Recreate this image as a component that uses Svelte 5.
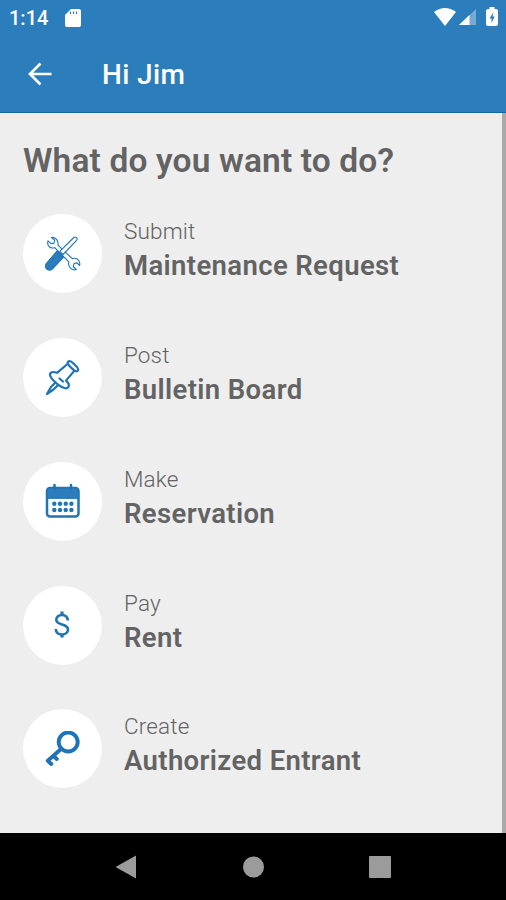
<script lang="ts">
    type Icon = "tools" | "pin" | "calendar" | "dollar" | "key";

    interface Action {
        verb: string;
        name: string;
        icon: Icon;
    }

    const actions: Action[] = [
        { verb: "Submit", name: "Maintenance Request", icon: "tools" },
        { verb: "Post", name: "Bulletin Board", icon: "pin" },
        { verb: "Make", name: "Reservation", icon: "calendar" },
        { verb: "Pay", name: "Rent", icon: "dollar" },
        { verb: "Create", name: "Authorized Entrant", icon: "key" },
    ];
</script>

<div class="screen">
    <header>
        <div class="status">
            <span class="time">1:14</span>
            <svg class="sd" width="16" height="20" viewBox="0 0 16 20">
                <path d="M6 1h8q2 0 2 2v14q0 2-2 2H2q-2 0-2-2V7z" fill="#fff" />
                <path d="M5.5 3.5v2.500M8.5 3.5v2.500M11.5 3.5v2.500" stroke="#2b7dbc" stroke-width="1.2" />
            </svg>
            <div class="signals">
                <svg width="22" height="18" viewBox="0 0 22 18">
                    <path d="M0 4Q11-4 22 4L11 18z" fill="#fff" />
                </svg>
                <svg class="cell" width="18" height="18" viewBox="0 0 18 18">
                    <path d="M17 1v16H0z" fill="#fff" fill-opacity=".35" />
                    <path d="M10.5 7v10H0z" fill="#fff" />
                </svg>
                <svg class="battery" width="12" height="20" viewBox="0 0 12 20">
                    <path d="M3.5 0h5v2H10q2 0 2 2v13q0 2-2 2H2q-2 0-2-2V4q0-2 2-2h1.500z" fill="#fff" />
                    <path d="M7.500 5L3.500 11.500h2V16L8.700 9.500H6.500z" fill="#2b7dbc" />
                </svg>
            </div>
        </div>
        <div class="toolbar">
            <button aria-label="Back">
                <svg width="24" height="24" viewBox="0 0 24 24" fill="none" stroke="#fff" stroke-width="2.700">
                    <path d="M23.500 12H3M12.500 1.500L2 12l10.500 10.500" />
                </svg>
            </button>
            <h1>Hi Jim</h1>
        </div>
    </header>

    <main>
        <h2>What do you want to do?</h2>
        <ul>
            {#each actions as action}
                <li>
                    <div class="circle">
                        <svg width="36" height="36" viewBox="0 0 36 36" fill="none" stroke="#1f74b8" stroke-linejoin="round" stroke-linecap="round">
                            {#if action.icon === "tools"}
                                <g stroke-width="1.100">
                                    <path d="M6.500 1.500l3.200 2.700-.7 2.900-3 .6-3-2.800c-1 3 .4 6.300 3.500 7 1.200.3 2.200 0 3.200-.2L23.800 25.800c-.8 3.300 1 7.200 4.500 8 1.200.2 2.200 0 3-.3l-3-3 .8-3 3-.6 2.500 2.600c.9-3.600-1.300-6.800-4.300-7.200-1.200-.2-2.200 0-3 .4L13 9.200c.8-3.600-2-8.500-6.500-7.700z" />
                                    <path d="M18 18.500L14.800 15.300 28.800 1.500c2-1.500 4.300.7 2.800 2.800z" fill="#fff" />
                                    <path d="M12 15l6.500 6L7.300 33c-3.700 3.400-9-1.700-6-5.300z" fill="#2b7dbc" />
                                </g>
                            {:else if action.icon === "pin"}
                                <g stroke-width="2.200">
                                    <path d="M23 1.800c1.700-1.600 3.700 0 5.800 2s5.200 4.500 4.200 6.500c-.8 1.500-2.700 1.200-4.300-.3s-7.500-6.400-5.700-8.200z" />
                                    <path d="M22.500 4L12 12.800c-3.500-1.500-8-1-6.800 3 .8 2.800 4.800 6.500 8.500 9.300s8.500 4.400 9.700 2c1.400-2.600-.3-4.600-2.400-6.500l8.500-10" />
                                    <path d="M10.500 22.500L6 27 2 34l6.500-4.500 4.700-4.500M14.500 18.500l3.500 3" />
                                </g>
                            {:else if action.icon === "calendar"}
                                <rect x="2" y="5" width="31.500" height="28.500" rx="3" stroke-width="2.500" />
                                <path d="M2 15V8q0-3 3-3h25.500q3 0 3 3v7z" fill="#2b7dbc" />
                                <path d="M9.500 2v4M26 2v4" stroke-width="2.500" />
                                <g fill="#1f74b8" stroke="none">
                                    {#each [9.300, 15, 20.700, 26.400] as x}
                                        <circle cx={x} cy="20.800" r="2.200" />
                                        <circle cx={x} cy="27" r="2.200" />
                                    {/each}
                                </g>
                            {:else if action.icon === "dollar"}
                                <path d="M22.800 13.500C22.500 9.900 20.300 8 17 8c-3.300 0-5.700 2-5.700 4.800 0 6.300 11.700 3 11.700 9.700 0 3-2.500 5-5.900 5-3.900 0-6.200-2.200-6.300-5.500" stroke-width="2.600" stroke-linecap="butt" />
                                <path d="M17 4.500v3.500M17 27.500v3" stroke-width="3.200" stroke-linecap="butt" />
                            {:else}
                                <circle cx="23.200" cy="11" r="9.500" stroke-width="3.900" />
                                <path d="M16 18L2.800 29.800l3.500 3.200M8.500 25l3.300 3" stroke-width="3.900" />
                            {/if}
                        </svg>
                    </div>
                    <div class="label">
                        <span class="verb">{action.verb}</span>
                        <span class="name">{action.name}</span>
                    </div>
                </li>
            {/each}
        </ul>
    </main>

    <nav>
        <svg width="22" height="24" viewBox="0 0 22 24"><path d="M21 .5v23L.5 12z" /></svg>
        <svg width="22" height="24" viewBox="0 0 22 24"><circle cx="11.500" cy="12" r="10.500" /></svg>
        <svg width="22" height="24" viewBox="0 0 22 24"><rect y="1" width="22" height="22" rx="1" /></svg>
    </nav>
</div>

<style>
    :global(body) {
        margin: 0;
    }
    .screen {
        width: 506px;
        height: 900px;
        display: flex;
        flex-direction: column;
        overflow: hidden;
        font-family: Roboto, sans-serif;
        color: #636363;
        background-color: #eee;
    }
    header {
        box-sizing: border-box;
        height: 113px;
        color: #fff;
        background-color: #2b7dbc;
        border-bottom: 1px solid #1268ae;
    }
    .status {
        display: flex;
        align-items: center;
        height: 36px;
        padding: 0 8px 0 9px;
    }
    .time {
        width: 56px;
        font-size: 20px;
        font-weight: 500;
        line-height: 36px;
    }
    .sd {
        margin-top: -1px;
    }
    .signals {
        display: flex;
        align-items: center;
        margin-left: auto;
        margin-top: -2px;
    }
    .cell {
        margin-left: 3px;
    }
    .battery {
        margin-left: 9px;
    }
    .toolbar {
        display: flex;
        align-items: center;
        height: 76px;
        padding-left: 28px;
    }
    button {
        display: flex;
        width: 74px;
        padding: 0;
        border: 0;
        background: none;
    }
    h1 {
        margin: 0;
        font-size: 28px;
        font-weight: 500;
        letter-spacing: 0.35px;
    }
    main {
        box-sizing: border-box;
        height: 720px;
        padding: 26px 0 0 23px;
        border-right: 4px solid #a9a9a9;
    }
    h2 {
        margin: 0;
        font-size: 33.5px;
        font-weight: 600;
        line-height: 44px;
        letter-spacing: 0.15px;
    }
    ul {
        display: flex;
        flex-direction: column;
        gap: 44.8px;
        margin: 31.3px 0 0;
        padding: 0;
        list-style: none;
    }
    li {
        display: flex;
        height: 79px;
    }
    .circle {
        display: flex;
        align-items: center;
        justify-content: center;
        width: 79px;
        height: 79px;
        border-radius: 50%;
        background-color: #fff;
    }
    .label {
        display: flex;
        flex-direction: column;
        margin-left: 22px;
    }
    .verb {
        font-size: 22.5px;
        font-weight: 300;
        line-height: 34px;
        letter-spacing: 0.15px;
    }
    .name {
        font-size: 27.5px;
        font-weight: 600;
        line-height: 35px;
        letter-spacing: 0.37px;
    }
    nav {
        display: flex;
        align-items: center;
        justify-content: space-between;
        height: 67px;
        padding: 0 115px;
        background-color: #000;
        fill: #9b9b9b;
    }
</style>
